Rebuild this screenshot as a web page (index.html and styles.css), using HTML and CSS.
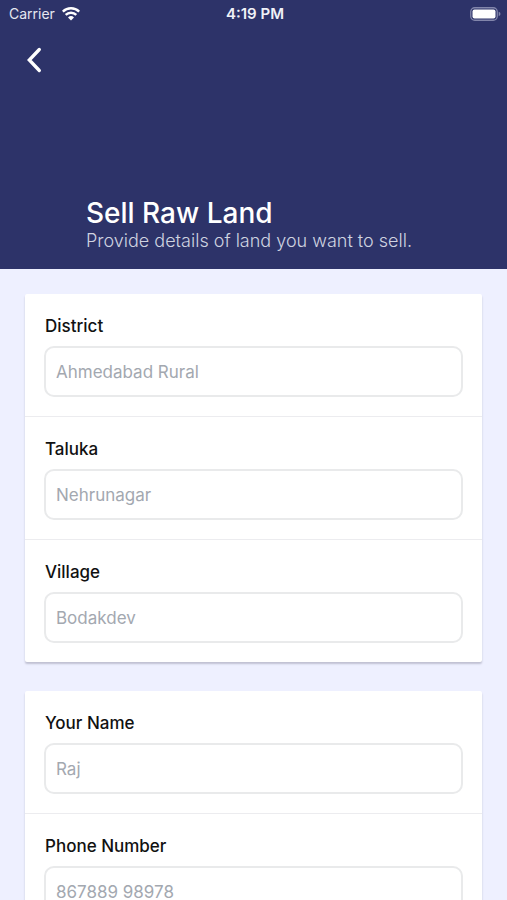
FILE: index.html
```html
<!DOCTYPE html>
<html lang="en">
<head>
<meta charset="utf-8">
<meta name="viewport" content="width=device-width, initial-scale=1">
<title>Sell Raw Land</title>
<link rel="stylesheet" href="styles.css">
</head>
<body>
<header class="hero">
  <div class="status">
    <div class="carrier">
      <span>Carrier</span>
      <svg class="wifi" viewBox="0 0 18 14" aria-hidden="true">
        <path d="M.8 4.600a11.700 11.700 0 0 1 16.400 0M3.700 7.900a7.500 7.500 0 0 1 10.600 0" fill="none" stroke="#fff" stroke-width="2.400"/>
        <path d="M6 10.400a4.300 4.300 0 0 1 6 0L9 13.500z" fill="#fff"/>
      </svg>
    </div>
    <span class="time">4:19 PM</span>
    <svg class="battery" viewBox="0 0 31 14" aria-hidden="true">
      <rect x="0.75" y="0.75" width="26.500" height="12.500" rx="4" fill="none" stroke="#8286ab" stroke-width="1.300"/>
      <rect x="2.500" y="2.500" width="23" height="9" rx="2" fill="#fff"/>
      <path d="M28.700 4.800q1.800.6 1.800 2.200t-1.800 2.200z" fill="#8286ab"/>
    </svg>
  </div>
  <button class="back" type="button" aria-label="Back">
    <svg viewBox="0 0 16 26" aria-hidden="true"><path d="M13.300 2.500 3.300 13l10 10.500" fill="none" stroke="#fff" stroke-width="3.300" stroke-linecap="round"/></svg>
  </button>
  <div class="heading">
    <h1>Sell Raw Land</h1>
    <p>Provide details of land you want to sell.</p>
  </div>
</header>
<main>
  <form class="form">
    <section class="card">
      <div class="field"><label for="district">District</label><input id="district" type="text" placeholder="Ahmedabad Rural"></div>
      <div class="field"><label for="taluka">Taluka</label><input id="taluka" type="text" placeholder="Nehrunagar"></div>
      <div class="field"><label for="village">Village</label><input id="village" type="text" placeholder="Bodakdev"></div>
    </section>
    <section class="card">
      <div class="field"><label for="name">Your Name</label><input id="name" type="text" placeholder="Raj"></div>
      <div class="field"><label for="phone">Phone Number</label><input id="phone" type="tel" placeholder="867889 98978"></div>
    </section>
  </form>
</main>
</body>
</html>
```
FILE: styles.css
```css
* { box-sizing: border-box; }
html { scrollbar-width: none; }
body {
  margin: 0;
  background: #eef0ff;
  color: #111;
  font-family: Inter, "Liberation Sans", sans-serif;
}
.hero {
  display: flex;
  flex-direction: column;
  min-height: 269px;
  background: #2d3369;
  color: #fff;
}
.status {
  display: grid;
  grid-template-columns: 1fr auto 1fr;
  align-items: center;
  height: 27px;
  padding: 0 6px 0 9px;
  font-size: 14px;
}
.carrier { display: flex; align-items: center; gap: 7px; color: #e6e7f0; }
.wifi { width: 18px; height: 14px; }
.time { font-size: 15px; font-weight: 600; color: #f0f1f7; }
.battery { width: 31px; height: 14px; justify-self: end; }
.back {
  align-self: flex-start;
  margin: 20px 0 0 26px;
  padding: 0;
  border: 0;
  background: none;
}
.back svg { display: block; width: 16px; height: 26px; }
.heading { margin-top: auto; padding: 0 24px 17px 86px; }
h1 { margin: 0; font-size: 28px; line-height: 34px; font-weight: 500; }
.heading p { margin: 0; font-size: 18px; line-height: 22px; font-weight: 300; color: #cfd3e0; }
.form { display: flex; flex-direction: column; gap: 29px; padding: 25px; }
.card { background: #fff; border-radius: 2px; box-shadow: 0 2px 2px #bfc0d2; }
.field { padding: 20px 19px 19px; }
.field + .field { border-top: 1px solid #ececef; }
label { display: block; margin-bottom: 8px; padding-left: 1px; font-size: 17px; line-height: 24px; font-weight: 500; }
input {
  display: block;
  width: 100%;
  height: 51px;
  padding: 0 10px;
  border: 2px solid #e9eaeb;
  border-radius: 10px;
  background: #fff;
  color: #111;
  font: 17px Inter, "Liberation Sans", sans-serif;
}
input::placeholder { color: #a3a8b0; opacity: 1; }
```
